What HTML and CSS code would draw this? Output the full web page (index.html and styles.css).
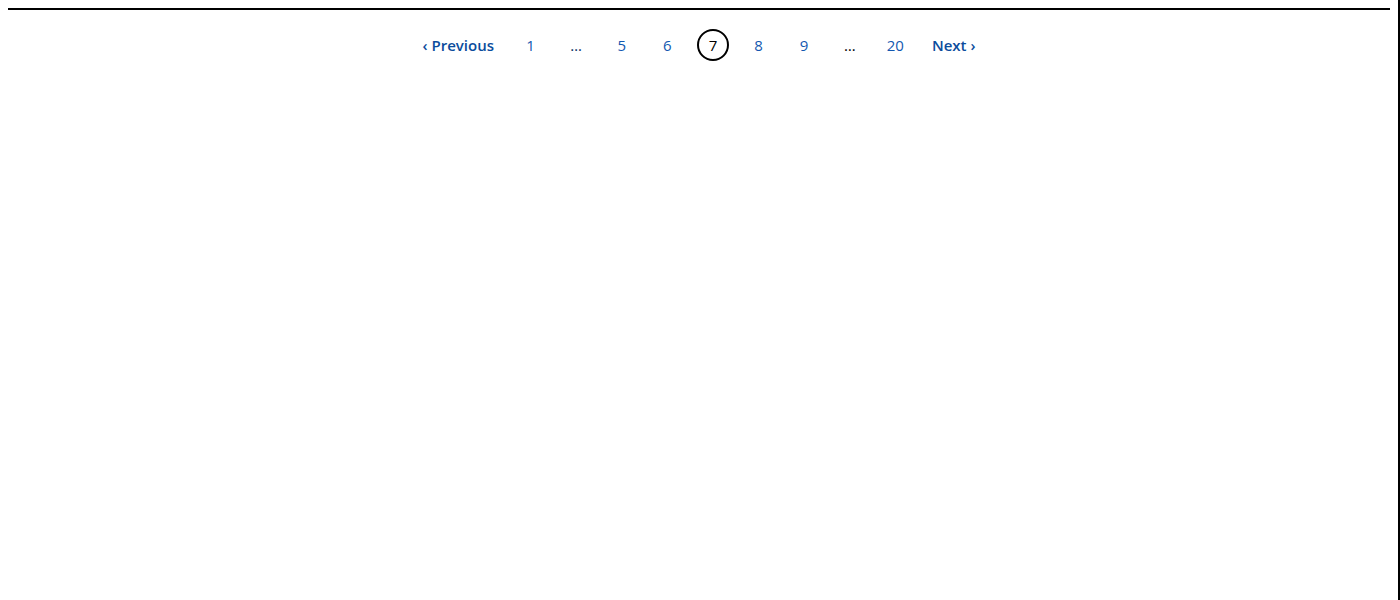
FILE: index.html
```
<!DOCTYPE html>
<html lang="en">
<head>
<meta charset="utf-8">
<title>Pagination</title>
<link rel="stylesheet" href="styles.css">
</head>
<body>
<nav class="pager" aria-label="Pagination">
  <ul class="pager-list">
    <li class="pager-item pager-edge"><a href="#">&lsaquo; Previous</a></li>
    <li class="pager-item"><a href="#">1</a></li>
    <li class="pager-item pager-gap dark">&hellip;</li>
    <li class="pager-item"><a href="#">5</a></li>
    <li class="pager-item"><a href="#">6</a></li>
    <li class="pager-item pager-current" aria-current="page">7</li>
    <li class="pager-item"><a href="#">8</a></li>
    <li class="pager-item"><a href="#">9</a></li>
    <li class="pager-item pager-gap">&hellip;</li>
    <li class="pager-item"><a href="#">20</a></li>
    <li class="pager-item pager-edge"><a href="#">Next &rsaquo;</a></li>
  </ul>
</nav>
</body>
</html>
```
FILE: styles.css
```
html {
  border-right: 2px solid #000;
  min-height: 100%;
  box-sizing: border-box;
  background: #fff;
}
body {
  margin: 8px;
  font-family: "Open Sans", "Noto Sans", sans-serif;
  font-size: 15px;
  color: #000;
}
.pager {
  border-top: 2px solid #000;
  padding-top: 19px;
}
.pager-list {
  list-style: none;
  margin: 0;
  padding: 0;
  display: flex;
  justify-content: center;
  align-items: center;
  gap: 13.6px;
}
.pager-item {
  width: 32px;
  height: 32px;
  display: flex;
  align-items: center;
  justify-content: center;
  box-sizing: border-box;
}
.pager-item a {
  color: #1358b0;
  text-decoration: none;
}
.pager-edge {
  width: auto;
  padding: 0 7px;
}
.pager-edge a {
  font-weight: 600;
  color: #0b4c9c;
}
.pager-gap {
  color: #000;
}
.pager-gap.dark {
  color: #0a2f63;
}
.pager-current {
  border: 2px solid #000;
  border-radius: 50%;
  font-weight: 500;
}
```
